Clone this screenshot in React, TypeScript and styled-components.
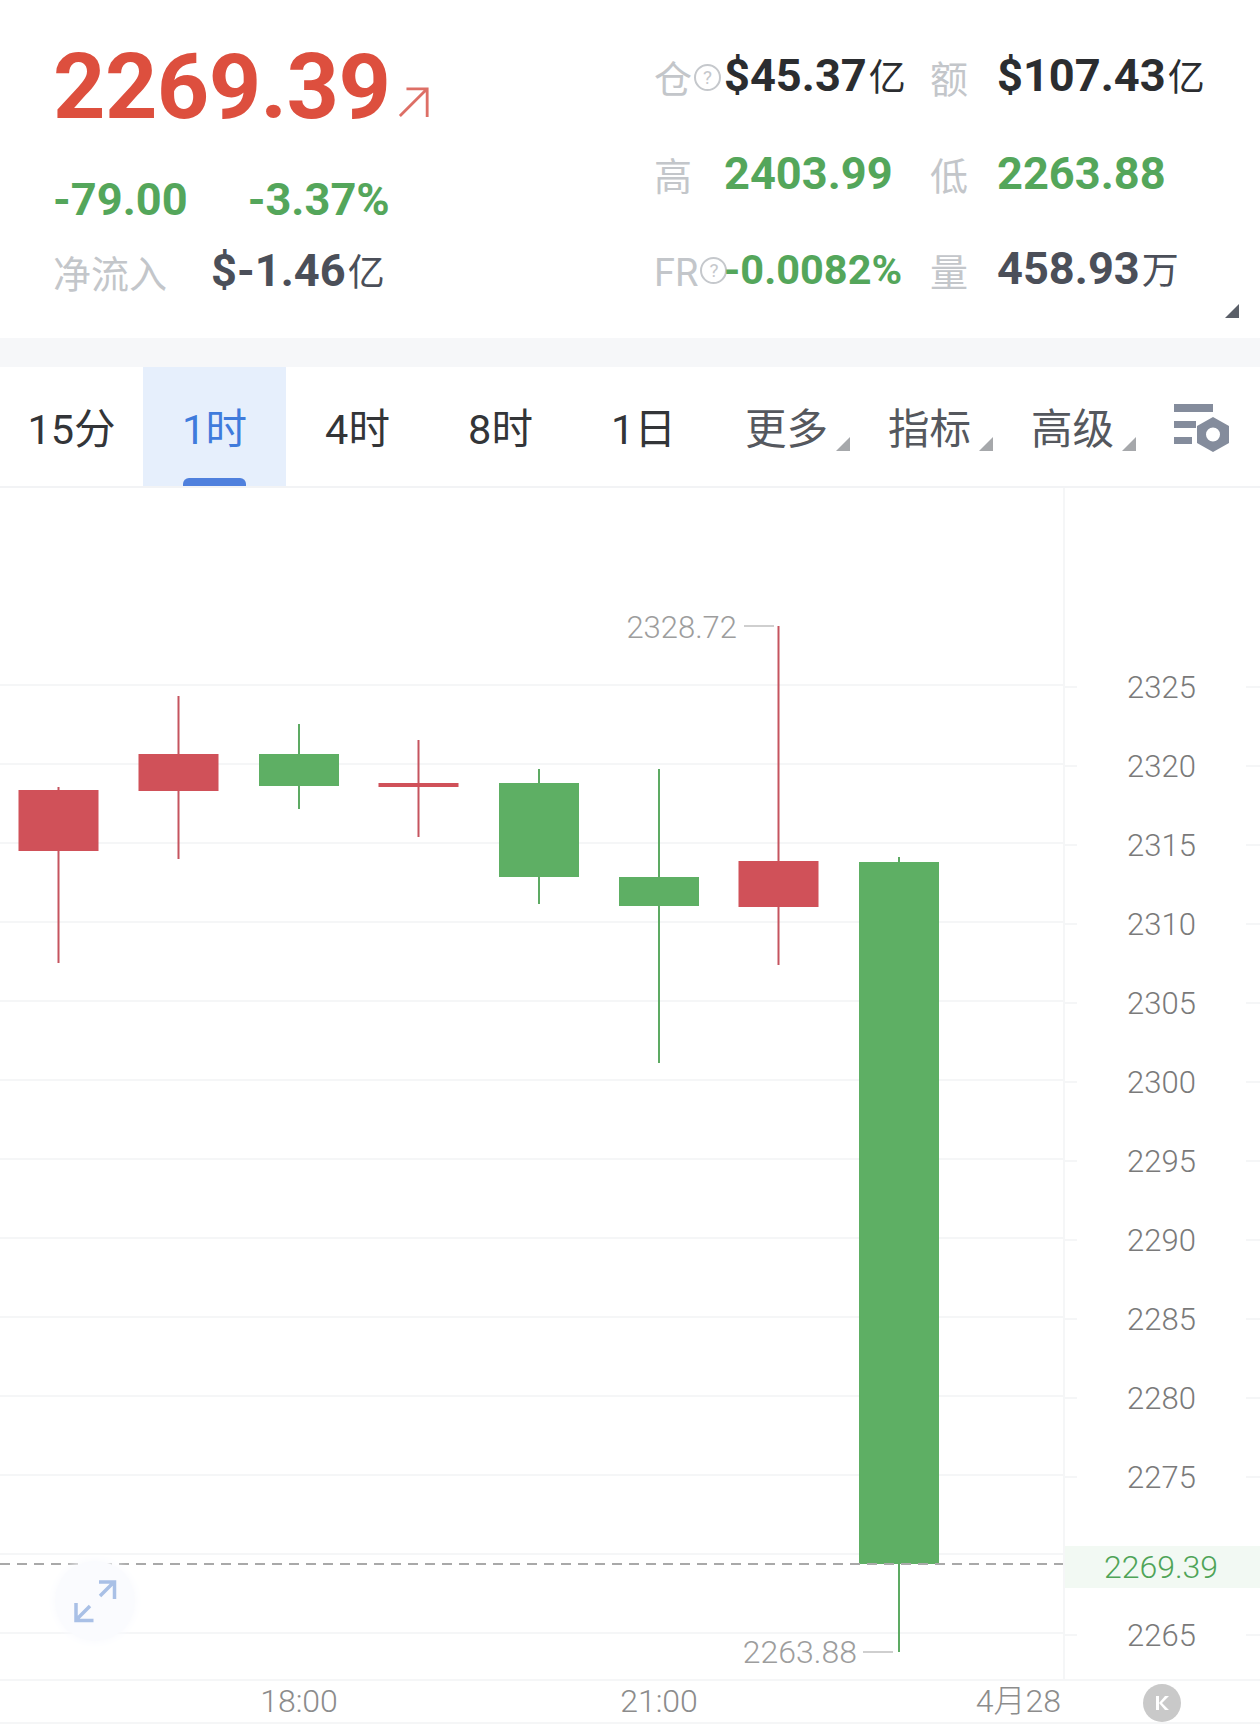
import styled, { createGlobalStyle } from "styled-components";

const GlobalStyle = createGlobalStyle`
  html, body {
    margin: 0;
    padding: 0;
    background: #fff;
  }
  body {
    font-family: Roboto, "Noto Sans CJK SC", sans-serif;
  }
`;

const RED = "#d05159";
const RED_WICK = "#c5545f";
const GREEN = "#5eaf64";
const GREEN_WICK = "#5daa63";
const GRID = "#f5f6f7";

const Page = styled.div`
  width: 1260px;
  height: 1728px;
  overflow: hidden;
  background: #fff;
`;

const Header = styled.header`
  position: relative;
  height: 338px;
  display: flex;
`;

const Summary = styled.div`
  width: 654px;
  padding: 37px 0 0 53px;
  box-sizing: border-box;
`;

const PriceRow = styled.div`
  height: 100px;
  display: flex;
  align-items: center;
`;

const Price = styled.span`
  font-size: 91.5px;
  line-height: 100px;
  font-weight: 700;
  letter-spacing: -0.6px;
  color: #dd4f3e;
`;

const TrendIcon = styled.svg`
  width: 32px;
  height: 32px;
  margin: 30px 0 0 8px;
`;

const ChangeRow = styled.div`
  display: flex;
  height: 50px;
  margin-top: 38px;
  align-items: center;
  gap: 60px;
`;

const NetRow = styled.div`
  display: flex;
  height: 50px;
  margin-top: 22px;
  align-items: center;
  gap: 44px;
`;

const Value = styled.span<{ $tone?: "green" | "dark" | "slate"; $small?: boolean }>`
  display: inline-flex;
  align-items: baseline;
  white-space: nowrap;
  font-size: ${(p) => (p.$small ? "41.5px" : "45.2px")};
  line-height: 50px;
  font-weight: 700;
  color: ${(p) =>
    p.$tone === "green" ? "#54a65b" : p.$tone === "slate" ? "#4b4f59" : "#2b2d30"};
`;

const Unit = styled.span`
  font-size: 37px;
  font-weight: 400;
  margin-left: 2px;
`;

const Label = styled.span`
  display: inline-flex;
  align-items: center;
  white-space: nowrap;
  padding-top: 6px;
  font-size: 38px;
  line-height: 50px;
  color: #c3c6ca;
`;

const Help = styled.span`
  flex: none;
  box-sizing: border-box;
  width: 27px;
  height: 27px;
  margin: -6px 0 0 2px;
  border: 2px solid #c5c8cc;
  border-radius: 50%;
  font-size: 19px;
  line-height: 23px;
  text-align: center;
  color: #c5c8cc;
`;

const Stats = styled.div`
  display: grid;
  grid-template-columns: 70px 206px 67px 1fr;
  grid-auto-rows: 96.5px;
  align-items: center;
  padding-top: 29px;
  flex: 1;
`;

const Corner = styled.i<{ $color: string; $right: number; $bottom: number }>`
  position: absolute;
  width: 14px;
  height: 14px;
  right: ${(p) => p.$right}px;
  bottom: ${(p) => p.$bottom}px;
  background: ${(p) => p.$color};
  clip-path: polygon(100% 0, 100% 100%, 0 100%);
`;

const Band = styled.div`
  height: 29px;
  background: #f6f7f9;
`;

const Tabs = styled.nav`
  height: 119px;
  display: grid;
  grid-template-columns: repeat(8, 143px) 1fr;
  border-bottom: 2px solid #f2f3f5;
  box-sizing: content-box;
`;

const Tab = styled.div<{ $active?: boolean; $muted?: boolean }>`
  position: relative;
  display: flex;
  align-items: center;
  justify-content: center;
  padding-bottom: 2px;
  font-size: 41.5px;
  color: ${(p) => (p.$active ? "#3f7bdc" : p.$muted ? "#55585e" : "#333538")};
  background: ${(p) => (p.$active ? "#e6effc" : "transparent")};
`;

const TabMark = styled.i`
  position: absolute;
  left: 40px;
  bottom: 0;
  width: 63px;
  height: 8px;
  border-radius: 6px 6px 0 0;
  background: #4f80dd;
`;

const SettingsCell = styled.div`
  display: flex;
  align-items: flex-start;
  padding: 37px 0 0 30px;
`;

const SettingsIcon = styled.svg`
  width: 56px;
  height: 48px;
`;

const ChartRow = styled.section`
  position: relative;
  height: 1191px;
  display: flex;
`;

const Plot = styled.div`
  position: relative;
  width: 1064px;
  flex: none;
`;

const PlotSvg = styled.svg`
  display: block;
  width: 1064px;
  height: 1191px;
`;

const Extreme = styled.span<{ $right: number; $top: number; $size: number }>`
  position: absolute;
  right: ${(p) => p.$right}px;
  top: ${(p) => p.$top}px;
  font-size: ${(p) => p.$size}px;
  line-height: 36px;
  font-weight: 300;
  color: #9d9d9d;
`;

const ExpandButton = styled.div`
  position: absolute;
  left: 55px;
  top: 1073px;
  width: 80px;
  height: 80px;
  border-radius: 50%;
  background: #fafbfe;
  box-shadow: 0 0 8px 2px #fafbfe;
  display: flex;
  align-items: center;
  justify-content: center;
`;

const ExpandIcon = styled.svg`
  width: 44px;
  height: 44px;
`;

const Axis = styled.div`
  position: relative;
  flex: 1;
  border-left: 2px solid ${GRID};
  margin-left: -1px;
  padding-top: 159.5px;
`;

const Tick = styled.div`
  height: 79px;
  display: flex;
  justify-content: center;
  align-items: center;
  padding-right: 2px;
  box-sizing: border-box;
  background: linear-gradient(${GRID}, ${GRID}) center / 100% 2px no-repeat;
`;

const TickLabel = styled.span`
  width: 169px;
  padding-top: 1px;
  text-align: center;
  background: #fff;
  font-size: 31px;
  line-height: 40px;
  font-weight: 300;
  color: #7a7a7a;
`;

const LastPrice = styled.div`
  position: absolute;
  left: 0;
  right: 0;
  top: 1058px;
  height: 42px;
  background: #f2f9f3;
  display: flex;
  align-items: center;
  justify-content: center;
  padding-right: 3px;
  font-size: 32px;
  font-weight: 300;
  color: #4fa457;
`;

const TimeAxis = styled.footer`
  height: 41px;
  display: grid;
  grid-template-columns: 1064px 1fr;
  border-top: 2px solid ${GRID};
  border-bottom: 2px solid ${GRID};
`;

const TimeLabels = styled.div`
  display: grid;
  grid-template-columns: 119px 360px 360px 225px;
  align-items: start;
  padding-top: 2px;
  font-size: 32px;
  line-height: 36px;
  font-weight: 300;
  color: #8c8c8c;
`;

const TimeLabel = styled.span<{ $end?: boolean }>`
  text-align: ${(p) => (p.$end ? "right" : "center")};
  padding-right: ${(p) => (p.$end ? "3px" : "0")};
  white-space: nowrap;
`;

const KCell = styled.div`
  display: flex;
  justify-content: center;
  padding-right: 1px;
`;

const KButton = styled.svg`
  width: 38px;
  height: 38px;
  margin-top: 3px;
  position: relative;
`;

type Candle = {
  up: boolean;
  x: number;
  top: number;
  bottom: number;
  high: number;
  low: number;
};

const candles: Candle[] = [
  { up: true, x: 18.5, top: 790, bottom: 851, high: 787, low: 963 },
  { up: true, x: 138.5, top: 754, bottom: 791, high: 696, low: 859 },
  { up: false, x: 259, top: 754, bottom: 786, high: 724, low: 809 },
  { up: true, x: 378.5, top: 783, bottom: 787, high: 740, low: 837 },
  { up: false, x: 499, top: 783, bottom: 877, high: 769, low: 904 },
  { up: false, x: 619, top: 877, bottom: 906, high: 769, low: 1063 },
  { up: true, x: 738.5, top: 861, bottom: 907, high: 626, low: 965 },
  { up: false, x: 859, top: 862, bottom: 1564, high: 857, low: 1652 },
];

const gridLines = Array.from({ length: 13 }, (_, i) => 685 + i * 79);
const ticks = [2325, 2320, 2315, 2310, 2305, 2300, 2295, 2290, 2285, 2280, 2275, 0, 2265];
const tabs = ["15分", "1时", "4时", "8时", "1日"];
const menus = ["更多", "指标", "高级"];

const App = () => {
  return (
    <Page>
      <GlobalStyle />
      <Header>
        <Summary>
          <PriceRow>
            <Price>2269.39</Price>
            <TrendIcon viewBox="0 0 34 34" fill="none" stroke="#dd6f66" strokeWidth="3">
              <path d="M2 32 31 3M9 3h22v30" />
            </TrendIcon>
          </PriceRow>
          <ChangeRow>
            <Value $tone="green">-79.00</Value>
            <Value $tone="green">-3.37%</Value>
          </ChangeRow>
          <NetRow>
            <Label>净流入</Label>
            <Value $tone="slate">
              $-1.46<Unit>亿</Unit>
            </Value>
          </NetRow>
        </Summary>
        <Stats>
          <Label>
            仓<Help>?</Help>
          </Label>
          <Value>
            $45.37<Unit>亿</Unit>
          </Value>
          <Label>额</Label>
          <Value>
            $107.43<Unit>亿</Unit>
          </Value>
          <Label>高</Label>
          <Value $tone="green">2403.99</Value>
          <Label>低</Label>
          <Value $tone="green">2263.88</Value>
          <Label>
            FR<Help>?</Help>
          </Label>
          <Value $tone="green" $small>
            -0.0082%
          </Value>
          <Label>量</Label>
          <Value $tone="slate">
            458.93<Unit>万</Unit>
          </Value>
        </Stats>
        <Corner $color="#5a5f68" $right={21} $bottom={20} />
      </Header>
      <Band />
      <Tabs>
        {tabs.map((t) => (
          <Tab key={t} $active={t === "1时"}>
            {t}
            {t === "1时" && <TabMark />}
          </Tab>
        ))}
        {menus.map((m) => (
          <Tab key={m} $muted>
            {m}
            <Corner $color="#a6a8ab" $right={8} $bottom={35} />
          </Tab>
        ))}
        <SettingsCell>
          <SettingsIcon viewBox="0 0 56 48">
            <g fill="#848c9c">
              <rect x="0" y="0" width="39" height="8" />
              <rect x="0" y="17" width="22" height="7" />
              <rect x="0" y="33" width="18" height="7" />
              <path
                fillRule="evenodd"
                d="M39 13 55 22V39L39 48 23 39V22ZM39 23.5a7 7 0 1 0 0 14 7 7 0 0 0 0-14Z"
              />
            </g>
          </SettingsIcon>
        </SettingsCell>
      </Tabs>
      <ChartRow>
        <Plot>
          <PlotSvg viewBox="0 488 1064 1191">
            {gridLines.map((y) => (
              <rect key={y} x="0" y={y - 1} width="1064" height="2" fill={GRID} />
            ))}
            {candles.map((c) => (
              <g key={c.x}>
                <rect
                  x={c.x + 39}
                  y={c.high}
                  width="2"
                  height={c.low - c.high}
                  fill={c.up ? RED_WICK : GREEN_WICK}
                />
                <rect
                  x={c.x}
                  y={c.top}
                  width="80"
                  height={c.bottom - c.top}
                  fill={c.up ? RED : GREEN}
                />
              </g>
            ))}
            <line
              x1="0"
              x2="1064"
              y1="1564"
              y2="1564"
              stroke="#a9a9a9"
              strokeWidth="2"
              strokeDasharray="10 7"
            />
            <rect x="744" y="625" width="30" height="2" fill="#cfcfcf" />
            <rect x="863" y="1651" width="30" height="2" fill="#cfcfcf" />
          </PlotSvg>
          <Extreme $right={327} $top={122} $size={31}>
            2328.72
          </Extreme>
          <Extreme $right={207} $top={1146} $size={32}>
            2263.88
          </Extreme>
          <ExpandButton>
            <ExpandIcon viewBox="0 0 44 44" fill="none" stroke="#a9c0e6" strokeWidth="3.5">
              <path d="M26 3h15.5v17M41 3 27 17M3 24v17.500h17.500M3 41 17 27" />
            </ExpandIcon>
          </ExpandButton>
        </Plot>
        <Axis>
          {ticks.map((t) => (
            <Tick key={t}>{t > 0 && <TickLabel>{t}</TickLabel>}</Tick>
          ))}
          <LastPrice>2269.39</LastPrice>
        </Axis>
      </ChartRow>
      <TimeAxis>
        <TimeLabels>
          <span />
          <TimeLabel>18:00</TimeLabel>
          <TimeLabel>21:00</TimeLabel>
          <TimeLabel $end>4月28</TimeLabel>
        </TimeLabels>
        <KCell>
          <KButton viewBox="0 0 38 38">
            <circle cx="19" cy="19" r="19" fill="#c9c9c9" />
            <path d="M13 12h3v14h-3zM26 12l-7 7 7 7h-4l-6-7 6-7z" fill="#fff" />
          </KButton>
        </KCell>
      </TimeAxis>
    </Page>
  );
};

export default App;
